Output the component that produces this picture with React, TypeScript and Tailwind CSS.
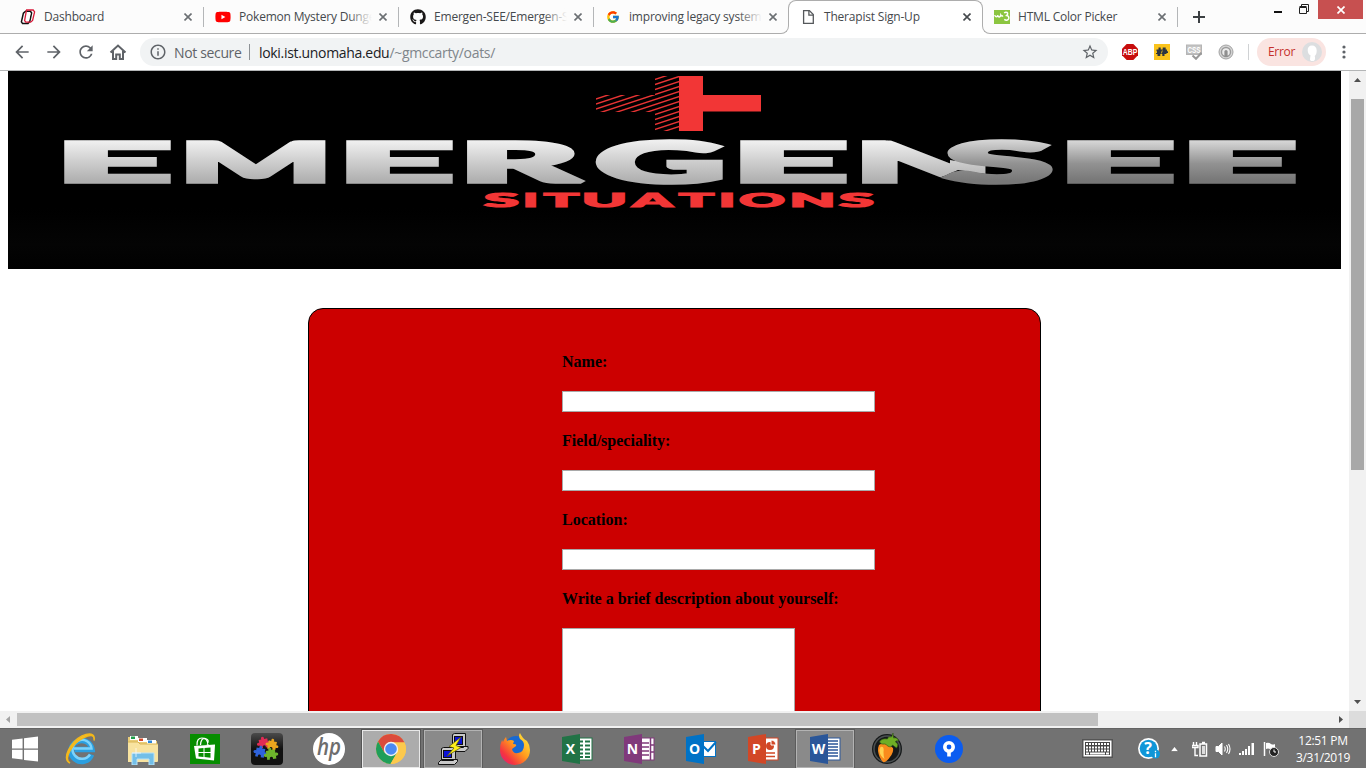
import React from "react";
import { FaGithub, FaYoutube } from "react-icons/fa";
import { FcGoogle } from "react-icons/fc";
import { MdArrowBack, MdArrowForward, MdInfoOutline, MdRefresh, MdStarBorder } from "react-icons/md";

const UI = "font-['Open_Sans','Noto_Sans',sans-serif]";

/* ---------- browser tabs ---------- */

function Close({ dark }: { dark?: boolean }) {
  return (
    <svg className="ml-auto mr-[11px] size-2 shrink-0" viewBox="0 0 8 8">
      <path d="M0.5 0.5L7.5 7.5M7.5 0.5L0.5 7.5" stroke={dark ? "#45494d" : "#6b6f73"} strokeWidth="1.6" />
    </svg>
  );
}

function OLogo() {
  return (
    <svg className="size-4" viewBox="0 0 16 16" fill="none">
      <path d="M5.600 2.200h4.800L11.600 4L9.800 12.500L8 14.600H2.600L1.400 12.800L3.400 4.200z" stroke="#111" strokeWidth="1.500" />
      <path d="M6.600 1h6.600L14.600 2.800L12.600 11.400L10.600 13.200H5.800L4.600 11.600L6.200 2.600z" stroke="#d71938" strokeWidth="1.300" />
      <path d="M7.400 4h3.200L9 11.400H6z" fill="#fff" />
    </svg>
  );
}

function PageIcon() {
  return (
    <svg className="size-4" viewBox="0 0 16 16" fill="none" stroke="#55585b" strokeWidth="1.3">
      <path d="M3.6 1.6h5.8l3.9 4v8.8H3.6z" />
      <path d="M8.9 1.8v4.3h4.2" />
    </svg>
  );
}

function W3() {
  return (
    <svg className="size-4" viewBox="0 0 16 16" fill="none">
      <rect y="1" width="16" height="14" fill="#8bc540" />
      <path d="M.8 6c.4 2.400 2.400 2.400 3 .3c.5 2.300 2.500 2.300 3-.3q.8 1.600 2.300.6" stroke="#fff" strokeWidth="1.400" />
      <path d="M10.200 4q1.300-1.300 2.800-.6q1.500 1.400-.4 3.100q2.800.5 2 3.300q-1.700 2.700-4.300.6" stroke="#fff" strokeWidth="1.500" />
    </svg>
  );
}

interface TabProps {
  icon: React.ReactNode;
  title: string;
  fade?: boolean;
  divider?: boolean;
  nudge?: boolean;
}

function Tab({ icon, title, fade, divider, nudge }: TabProps) {
  return (
    <div className={`relative flex h-[33px] w-[195px] shrink-0 items-center pl-3 ${nudge ? "-ml-px" : ""}`}>
      <span className="flex size-4 shrink-0 items-center justify-center">{icon}</span>
      <span className="relative ml-2 w-[133px] overflow-hidden whitespace-nowrap tracking-[-0.2px]">
        {title}
        {fade && <span className="absolute inset-y-0 right-0 w-6 bg-linear-to-r from-transparent to-[#fcfcfc]" />}
      </span>
      <Close />
      {divider && <span className="absolute right-[-1px] top-[7px] h-5 w-px bg-[#b4b6b8]" />}
    </div>
  );
}

function TabStrip() {
  return (
    <div className="flex h-[34px] border-b border-[#adadad] bg-[#fcfcfc] pl-2 text-[12px] text-[#45494d]">
      <Tab icon={<OLogo />} title="Dashboard" divider />
      <Tab icon={<FaYoutube className="size-4 text-[#f00]" />} title="Pokemon Mystery Dungeon" fade divider />
      <Tab icon={<FaGithub className="size-4 text-[#191717]" />} title="Emergen-SEE/Emergen-SEE" fade divider />
      <Tab icon={<FcGoogle className="size-[14px]" />} title="improving legacy systems" fade />
      <div className="relative z-10 flex h-[34px] w-[195px] shrink-0 items-center rounded-t-lg border border-b-0 border-[#adadad] bg-white pb-px pl-[11px]">
        <span className="absolute -left-2 bottom-0 size-2 bg-white">
          <span className="block size-2 rounded-br-lg border-b border-r border-[#adadad] bg-[#fcfcfc]" />
        </span>
        <span className="absolute -right-2 bottom-0 size-2 bg-white">
          <span className="block size-2 rounded-bl-lg border-b border-l border-[#adadad] bg-[#fcfcfc]" />
        </span>
        <PageIcon />
        <span className="ml-2 whitespace-nowrap tracking-[-0.2px]">Therapist Sign-Up</span>
        <Close dark />
      </div>
      <Tab icon={<W3 />} title="HTML Color Picker" divider nudge />
      <svg className="ml-4 mt-[11px] size-3" viewBox="0 0 12 12">
        <path d="M6 0v12M0 6h12" stroke="#3c4043" strokeWidth="2" />
      </svg>
      <div className="ml-auto mr-[3px] flex h-[19px]">
        <svg className="mr-[17px] mt-[11px] h-[2px] w-2" viewBox="0 0 8 2">
          <rect width="8" height="2" fill="#111" />
        </svg>
        <svg className="mr-[9px] mt-1 size-[10px]" viewBox="0 0 10 10" fill="none" stroke="#222">
          <path d="M2.500 2V.5h7v7H8" />
          <path d="M.5 3.500h7v6h-7zM.5 2.500h7" />
        </svg>
        <div className="flex w-[45px] items-center justify-center bg-[#c75050]">
          <svg className="size-[8px]" viewBox="0 0 8 8">
            <path d="M.5 .5l7 7M7.500 .5l-7 7" stroke="#fff" strokeWidth="1.700" />
          </svg>
        </div>
      </div>
    </div>
  );
}

/* ---------- toolbar ---------- */

function Toolbar() {
  return (
    <div className="flex h-[37px] items-center border-b border-[#b3b5b6] bg-white text-[#5f6368]">
      <div className="flex items-center gap-3 pl-3">
        <MdArrowBack className="size-5" />
        <MdArrowForward className="size-5" />
        <MdRefresh className="size-5" />
        <svg className="size-5" viewBox="0 0 20 20" fill="none" stroke="#5f6368" strokeWidth="2">
          <path d="M2.500 10.500L10 3.500l7.500 7M5 9v8h3.200v-4.500h3.600V17H15V9" />
        </svg>
      </div>
      <div className="ml-3 flex h-7 w-[968px] items-center rounded-full bg-[#f1f3f4] pl-[9px] text-[14px]">
        <MdInfoOutline className="size-[18px]" />
        <span className="ml-[7px] w-[67px] whitespace-nowrap tracking-[-0.35px]">Not secure</span>
        <span className="ml-2 h-4 w-px bg-[#8d9195]" />
        <span className="ml-[9px] whitespace-nowrap tracking-[-0.32px] text-[#80868b]">
          <span className="text-[#202124]">loki.ist.unomaha.edu</span>/~gmccarty/oats/
        </span>
        <MdStarBorder className="ml-auto mr-[9px] size-[18px]" />
      </div>
      <div className="ml-[14px] flex items-center gap-4">
        <svg className="size-4" viewBox="0 0 16 16">
          <path d="M4.700 0h6.600L16 4.700v6.600L11.300 16H4.700L0 11.300V4.700z" fill="#c70d0d" />
          <text x="8" y="11" textAnchor="middle" fontFamily="Liberation Sans" fontWeight="700" fontSize="8.500" textLength="14.500" lengthAdjust="spacingAndGlyphs" fill="#fff">ABP</text>
        </svg>
        <svg className="size-4" viewBox="0 0 16 16">
          <rect width="16" height="16" fill="#fac31c" />
          <path d="M4.500 3.500h2.200v2h2v-2h3v2H13v1.700h1v1.800h-1.500v1H10.500v2H8.300v-2h-2v2H3.500v-2H2V9h1V7.200h-.5V5.500h2z" fill="#2c3440" />
          <path d="M8.300 6.500L7.300 9.500" stroke="#fac31c" strokeWidth=".8" />
        </svg>
        <svg className="size-4" viewBox="0 0 16 16">
          <path d="M0 .5h16v10.500H0z" fill="#b5b5b5" />
          <path d="M1 1.500h14v8H1z" fill="#c4c4c4" />
          <text x="8" y="8.600" textAnchor="middle" fontFamily="Liberation Sans" fontWeight="700" fontSize="8.500" textLength="13" lengthAdjust="spacingAndGlyphs" fill="#fff">CSS</text>
          <path d="M6.500 11.500L10 14.800L15.500 8.800" fill="none" stroke="#999" strokeWidth="2" />
        </svg>
        <svg className="size-4" viewBox="0 0 16 16" fill="none">
          <circle cx="8" cy="8" r="7" fill="#d4d4d4" stroke="#a3a3a3" />
          <circle cx="8" cy="8" r="4.500" fill="#ececec" stroke="#9b9b9b" strokeWidth="1.400" />
          <path d="M6.400 13V7.500a1.600 1.600 0 0 1 3.200 0V13z" fill="#8f8f8f" />
        </svg>
      </div>
      <span className="ml-[14px] h-4 w-px bg-[#d0d2d4]" />
      <div className="ml-2 flex h-7 w-[69px] items-center rounded-full bg-[#fae4e1] pl-[11px] tracking-[-0.3px] text-[#c5302c]">
        <span className="whitespace-nowrap text-[12px]">Error</span>
        <svg className="ml-auto mr-1 size-5" viewBox="0 0 20 20">
          <circle cx="10" cy="10" r="10" fill="#dcdee0" />
          <path d="M10 3.500c-3 0-4.500 2-4.300 5c.2 2.500 1.300 4.500 2.800 4.700L8 17q-.2 2 2.500 2c2.500 0 3-2 2.200-5c1.500-1 2-3 2-5.500c0-3-1.700-5-4.700-5z" fill="#fff" />
        </svg>
      </div>
      <svg className="ml-4 h-4 w-1" viewBox="0 0 4 16" fill="#5f6368">
        <circle cx="2" cy="3" r="1.600" />
        <circle cx="2" cy="8" r="1.600" />
        <circle cx="2" cy="13" r="1.600" />
      </svg>
    </div>
  );
}

/* ---------- banner ---------- */

interface GlyphProps {
  char: string;
  x: number;
  y: number;
  w: number;
  h: number;
  fill: string;
}

const THICKEN = 13;
let ctx: CanvasRenderingContext2D | null = null;

/* Stretches a single heavy letter, outline included, so that it fills the given box. */
function Glyph({ char, x, y, w, h, fill }: GlyphProps) {
  ctx = ctx ?? document.createElement("canvas").getContext("2d");
  if (!ctx) return null;
  ctx.font = "900 200px Lato";
  const m = ctx.measureText(char);
  const sx = w / (m.actualBoundingBoxLeft + m.actualBoundingBoxRight + THICKEN);
  const sy = h / (m.actualBoundingBoxAscent + m.actualBoundingBoxDescent + THICKEN);
  const tx = x + (m.actualBoundingBoxLeft + THICKEN / 2) * sx;
  const ty = y + (m.actualBoundingBoxAscent + THICKEN / 2) * sy;
  return (
    <text
      transform={`translate(${tx} ${ty}) scale(${sx} ${sy})`}
      fontFamily="Lato"
      fontWeight="900"
      fontSize="200"
      fill={fill}
      stroke={fill}
      strokeWidth={THICKEN}
      strokeMiterlimit="2"
    >
      {char}
    </text>
  );
}

const WORD: [string, number, number][] = [
  ["E", 64, 107],
  ["M", 186, 140],
  ["E", 346, 107],
  ["R", 467, 120],
  ["G", 595, 128],
  ["E", 740, 107],
];
const WORD_DARK: [string, number, number][] = [
  ["S", 941, 112],
  ["E", 1067, 107],
  ["E", 1189, 107],
];
const SUB: [string, number, number][] = [
  ["S", 483, 36],
  ["I", 525, 11],
  ["T", 543, 37],
  ["U", 584, 41],
  ["A", 630, 45],
  ["T", 678, 37],
  ["I", 721, 12],
  ["O", 739, 46],
  ["N", 792, 41],
  ["S", 838, 36],
];

function Banner() {
  return (
    <svg className="ml-2 block h-[198px] w-[1333px] shrink-0" viewBox="8 71 1333 198">
      <defs>
        <linearGradient id="silver" x1="0" y1="0" x2="0" y2="1">
          <stop offset=".2" stopColor="#f0f0f0" />
          <stop offset=".5" stopColor="#cfcfcf" />
          <stop offset=".8" stopColor="#b0b0b0" />
        </linearGradient>
        <linearGradient id="steel" x1="0" y1="0" x2="0" y2="1">
          <stop offset=".2" stopColor="#d6d6d6" />
          <stop offset=".54" stopColor="#929292" />
          <stop offset=".8" stopColor="#777" />
        </linearGradient>
        <linearGradient id="floor" x1="0" y1="0" x2="0" y2="1">
          <stop offset="0" stopColor="#000" />
          <stop offset=".6" stopColor="#040404" />
          <stop offset="1" stopColor="#010101" />
        </linearGradient>
        <clipPath id="leftArm">
          <path d="M655 76h25v55h-25V112h-59V95h59z" />
        </clipPath>
        <clipPath id="cutN">
          <path d="M860 138H898L950 163V160L986 166V174L958 170L939 178L925 186H860z" />
        </clipPath>
      </defs>
      <rect x="8" y="71" width="1333" height="198" fill="#000" />
      <rect x="8" y="208" width="1333" height="61" fill="url(#floor)" />
      <path d="M679 76h24v19h58v16.500h-58V131h-24z" fill="#f23636" />
      <g clipPath="url(#leftArm)" stroke="#e83434" strokeWidth="1.400">
        {Array.from({ length: 34 }, (_, i) => (
          <path key={i} d={`M590 ${76 + i * 5}l95 -31.500`} />
        ))}
      </g>
      {WORD.map(([c, x, w], i) => (
        <Glyph key={i} char={c} x={x} y={c === "G" ? 139 : 140} w={w} h={c === "G" ? 46 : 44} fill="url(#silver)" />
      ))}
      <g clipPath="url(#cutN)">
        <Glyph char="N" x={862} y={140} w={124} h={44} fill="url(#silver)" />
      </g>
      {WORD_DARK.map(([c, x, w], i) => (
        <Glyph key={i} char={c} x={x} y={c === "S" ? 139 : 140} w={w} h={c === "S" ? 46 : 44} fill="url(#steel)" />
      ))}
      {SUB.map(([c, x, w], i) => (
        <Glyph key={i} char={c} x={x} y={193} w={w} h={15} fill="#f23636" />
      ))}
    </svg>
  );
}

/* ---------- page ---------- */

function Field({ label, children }: { label: string; children: React.ReactNode }) {
  return (
    <label className="mb-5 block">
      <span className="mb-5 block h-[18px] whitespace-nowrap text-[16px] font-bold leading-[18px]">{label}</span>
      {children}
    </label>
  );
}

const BOX = "block border border-[#a9a9a9] bg-white";

function Page() {
  return (
    <div className="h-[640px] w-[1349px] overflow-hidden bg-white">
      <Banner />
      <form className="ml-[308px] mt-[39px] h-[600px] w-[733px] rounded-[15px] border border-black bg-[#cc0000] pl-[253px] pt-11 font-['Liberation_Serif',serif] text-black">
        {["Name:", "Field/speciality:", "Location:"].map((l) => (
          <Field key={l} label={l}>
            <input className={`${BOX} h-[21px] w-[313px]`} />
          </Field>
        ))}
        <Field label="Write a brief description about yourself:">
          <textarea className={`${BOX} h-[120px] w-[233px] resize-none`} />
        </Field>
      </form>
    </div>
  );
}

function Arrow({ d, color = "#505050" }: { d: string; color?: string }) {
  return (
    <svg className="size-[17px] shrink-0" viewBox="0 0 17 17" fill={color}>
      <path d={d} />
    </svg>
  );
}

/* ---------- taskbar ---------- */

function Office({ letter, color, children }: { letter: string; color: string; children: React.ReactNode }) {
  return (
    <svg className="size-8" viewBox="0 0 32 32">
      <rect x="17" y="5" width="14" height="22" fill="#fff" stroke={color} strokeWidth="1" />
      {children}
      <path d="M1 4L19 1v30L1 28z" fill={color} />
      <text x="9.500" y="21" textAnchor="middle" fontFamily="Open Sans" fontWeight="700" fontSize="14" fill="#fff">{letter}</text>
    </svg>
  );
}

const IE = (
  <svg className="size-8" viewBox="0 0 32 32" fill="none">
    <path d="M26.500 21.500A10.500 10.500 0 1 1 27 16.500H9.500" stroke="#2b9fe0" strokeWidth="5.500" />
    <path d="M25 21.500A9.500 9.500 0 1 1 26.500 15.500H9" stroke="#7dd3fb" strokeWidth="2.500" />
    <path d="M5 30C-2 26 7 10 19 4.500C25 1.500 30 1.500 29 7.500C30.500 0 24-.5 17 3C6 8.500-4 26 5 30z" fill="#f6c62b" stroke="#f3b71b" strokeWidth="1.500" />
  </svg>
);

const Explorer = (
  <svg className="size-8" viewBox="0 0 32 32">
    <path d="M1 4h10l1 2h6l1 2h11v20H1z" fill="#e9cc78" />
    <path d="M3 3h8v4H3zM11 5h9v4h-9zM20 7h9v4h-9z" fill="#fff" />
    <path d="M4 3.500h4V6H4z" fill="#1f9f4a" />
    <path d="M12 5.500h4V8h-4z" fill="#d54b2b" />
    <path d="M21 7.500h4V10h-4z" fill="#2d87d8" />
    <path d="M1 9h10l2 2h18v17q0 1-1 1H1z" fill="#f8e3a0" />
    <path d="M1 9h10l2 2h18" stroke="#d9b655" fill="none" />
    <path d="M5 32V20h22v12h-5v-6H10v6z" fill="#73bfe8" stroke="#b9e3f9" />
    <path d="M9 15v9M5 20h9" stroke="#fff" strokeWidth="1" opacity=".7" />
  </svg>
);

const Store = (
  <svg className="size-8" viewBox="0 0 32 32">
    <rect x="1" y="1" width="30" height="30" fill="#068d00" />
    <path d="M5 13l21-1.500-1 16L7 25.500z" fill="#fff" />
    <path d="M8 12.500Q7.500 5 13 5t6 7M11.500 12q.5-7.500 5-6.500t1.500 6" fill="none" stroke="#fff" strokeWidth="1.200" />
    <path d="M9.500 15.500l5-.5v4h-5zM15.500 15l6-.5V19h-6zM9.500 20h5v4l-5-.5zM15.500 20h6v4.700l-6-.6z" fill="#068d00" />
  </svg>
);

const PIECE = "M1 2h2.500C2.500-1 7-1 6 2h3v3c3-1 3 3.500 0 2.500V10H6c1-3-3.500-3-2.500 0H1V7c-3 1-3-3.500 0-2.500z";
const Puzzle = (
  <svg className="size-8" viewBox="0 0 32 32">
    <defs>
      <linearGradient id="pz" x1="0" y1="0" x2="0" y2="1">
        <stop stopColor="#4b4b4b" />
        <stop offset=".5" stopColor="#111" />
      </linearGradient>
    </defs>
    <rect width="32" height="32" rx="4" fill="url(#pz)" />
    <path d={PIECE} transform="translate(7 4) rotate(-12 5 5) scale(1.100)" fill="#e22c55" />
    <path d={PIECE} transform="translate(16 6) rotate(12 5 5) scale(1.050)" fill="#eba51e" />
    <path d={PIECE} transform="translate(4 13) rotate(10 5 5) scale(1.100)" fill="#2e63dd" />
    <path d={PIECE} transform="translate(14 15) rotate(-10 5 5) scale(1.150)" fill="#6db42c" />
  </svg>
);

const HP = (
  <svg className="size-8" viewBox="0 0 32 32">
    <circle cx="16" cy="16" r="16" fill="#fff" />
    <text x="16" y="22" textAnchor="middle" fontFamily="Open Sans" fontStyle="italic" fontWeight="600" fontSize="24" textLength="24" lengthAdjust="spacingAndGlyphs" fill="#6d6d6d">hp</text>
  </svg>
);

const Chrome = (
  <svg className="size-8" viewBox="0 0 32 32">
    <circle cx="16" cy="16" r="15" fill="#fcc94d" />
    <path d="M16 16L9.500 19.750L3 8.500A15 15 0 0 1 29.500 9.500H16z" fill="#db4b3c" />
    <path d="M3 8.500A15 15 0 0 0 15.500 31L22 19.750L16 16l-6.500 3.750z" fill="#1f9e5a" />
    <path d="M16 9.500h13.500A15 15 0 0 1 15.500 31L22 19.750z" fill="#fcc94d" />
    <circle cx="16" cy="16" r="7.200" fill="#f1f1f1" />
    <circle cx="16" cy="16" r="5.800" fill="#4a8af4" />
  </svg>
);

const Putty = (
  <svg className="size-8" viewBox="0 0 32 32" strokeWidth="1">
    <path d="M15.500 1.500l2-1h11v12l-2 2h-11zM12.500 16.500l3-3h15.500v2l-3 3H12.500z" fill="#c9c9c9" stroke="#111" />
    <rect x="17.500" y="3.500" width="8" height="8" fill="#0a12d8" stroke="#111" />
    <path d="M4.500 15.500l2-1h12v11l-2 2h-12zM1.500 29.500l3-3h16v2l-3 3h-16z" fill="#c9c9c9" stroke="#111" />
    <rect x="6.500" y="17.500" width="8" height="7" fill="#0a12d8" stroke="#111" />
    <path d="M24 4L12 13.500l5 1.500L10 23l14-8.500-5-2z" fill="#ffee1a" stroke="#55520a" strokeWidth=".7" />
  </svg>
);

const Firefox = (
  <svg className="size-8" viewBox="0 0 32 32">
    <defs>
      <linearGradient id="ff" x1="1" y1="0" x2="0" y2="1">
        <stop offset=".1" stopColor="#ffe43a" />
        <stop offset=".45" stopColor="#ff9a1d" />
        <stop offset=".75" stopColor="#f6353f" />
        <stop offset="1" stopColor="#d9158c" />
      </linearGradient>
    </defs>
    <circle cx="17" cy="14" r="11" fill="#1769d2" />
    <path d="M3 7l1 2q1-3 3-5l1 4q4-2 7 0l-1 3q4 0 3 2l-4 3q1 5 6 4q6-1 6-8q0-4-4-6q-2-4 0-6q2 5 7 8q3 4 3 9A15 15 0 0 1 1 17Q1 11 3 7z" fill="url(#ff)" />
  </svg>
);

const FL = (
  <svg className="size-8" viewBox="0 0 32 32">
    <circle cx="16" cy="16" r="15" fill="#151819" />
    <circle cx="16" cy="16" r="13" fill="none" stroke="#4a4f50" strokeWidth="1.500" />
    <path d="M8 12q6-4 14 3q1 4-3 9q-4 6-7 5q-4-4-5-11q0-4 1-6z" fill="#f98b1c" />
    <path d="M9.500 14q4-1 3 5q0 5 1 7q-5-3-5-9z" fill="#ffd14f" />
    <path d="M22 0l.5 5q4-1 5 3q-3-1-3 1q4 2 1 6l-4-3q-1 3-5 1q-1-2-3-2q-3 1-5-2q2-4 8-3q0-3 4-2z" fill="#6fae25" stroke="#2c5414" strokeWidth=".6" />
  </svg>
);

const Pin = (
  <svg className="size-8" viewBox="0 0 32 32">
    <circle cx="16" cy="16" r="14" fill="#0b5cf0" />
    <circle cx="16" cy="14" r="4.200" fill="none" stroke="#fff" strokeWidth="3.600" />
    <path d="M14.200 17h3.600v6.500h-3.600z" fill="#fff" />
  </svg>
);

const APPS: { icon: React.ReactNode; state?: "active" | "open" }[] = [
  { icon: IE },
  { icon: Explorer },
  { icon: Store },
  { icon: Puzzle },
  { icon: HP },
  { icon: Chrome, state: "active" },
  { icon: Putty, state: "open" },
  { icon: Firefox },
  {
    icon: (
      <Office letter="X" color="#217346">
        <path d="M19 8.500h3M24 8.500h5M19 12.500h3M24 12.500h5M19 16.500h3M24 16.500h5M19 20.500h3M24 20.500h5M19 24h3M24 24h5" stroke="#217346" strokeWidth="2" />
      </Office>
    ),
  },
  {
    icon: (
      <Office letter="N" color="#80397b">
        <path d="M19 10h7M19 14h7M19 18h7M19 22h7M27.500 5v22M28 12h3M28 19h3" stroke="#80397b" strokeWidth="1.500" />
      </Office>
    ),
  },
  {
    icon: (
      <svg className="size-8" viewBox="0 0 32 32">
        <rect x="16" y="8.500" width="14.500" height="15" fill="#fff" stroke="#0072c6" />
        <path d="M18 13l5 5L31 9" fill="none" stroke="#0072c6" strokeWidth="2" />
        <path d="M1 4L19 1v30L1 28z" fill="#0072c6" />
        <text x="9.500" y="21" textAnchor="middle" fontFamily="Open Sans" fontWeight="700" fontSize="14" fill="#fff">O</text>
      </svg>
    ),
  },
  {
    icon: (
      <Office letter="P" color="#d24726">
        <circle cx="23" cy="13" r="4" fill="#d24726" />
        <path d="M24 12V7a5 5 0 0 1 5 5z" fill="#d24726" stroke="#fff" />
        <path d="M19 20h9M19 23.500h9" stroke="#d24726" strokeWidth="1.500" />
      </Office>
    ),
  },
  {
    icon: (
      <Office letter="W" color="#2a5699">
        <path d="M19 8h10M19 11h10M19 14h10M19 17h10M19 20h10M19 23h10" stroke="#2a5699" strokeWidth="1.300" />
      </Office>
    ),
    state: "open",
  },
  { icon: FL },
  { icon: Pin },
];

const SLOT = "flex h-[38px] w-[58px] items-center justify-center border";

function slotClass(state?: "active" | "open") {
  if (state === "active") return `${SLOT} border-[#e8e8e8] bg-[#acacac] outline outline-[#555]`;
  if (state === "open") return `${SLOT} border-[#b3b3b3] bg-[#8a8a8a] outline outline-[#5c5c5c]`;
  return `${SLOT} border-transparent`;
}

function Taskbar() {
  return (
    <div className="flex h-10 border-t border-[#646464] bg-[#727272]">
      <div className="flex w-[50px] items-center justify-center">
        <svg className="h-[26px] w-[26px]" viewBox="0 0 27 27" fill="#fff">
          <path d="M0 4l11-1.500V13H0zM12.500 2.300L27 .5V13H12.500zM0 14.300h11V24.500L0 23zM12.500 14.300H27V26.500l-14.500-1.700z" />
        </svg>
      </div>
      <div className="flex items-center gap-1 pl-0.5">
        {APPS.map((a, i) => (
          <div key={i} className={slotClass(a.state)}>{a.icon}</div>
        ))}
      </div>
      <div className="ml-auto flex items-center">
        <svg className="h-[19px] w-[31px]" viewBox="0 0 31 19" fill="none">
          <rect x=".5" y=".5" width="30" height="18" fill="#555" stroke="#555" />
          <rect x="1.500" y="1.500" width="28" height="16" fill="#fff" />
          <rect x="3" y="3" width="25" height="13" fill="#444" />
          <path d="M4 5h23M4 8.500h23M4 11.500h23" stroke="#fff" strokeWidth="2" strokeDasharray="2 1" />
          <path d="M4 14.500h3M8 14.500h15M24 14.500h3" stroke="#fff" strokeWidth="2" />
        </svg>
        <svg className="ml-[25px] size-[22px]" viewBox="0 0 22 22">
          <circle cx="10.500" cy="10.500" r="10.500" fill="#fff" />
          <circle cx="10.500" cy="10.500" r="8.800" fill="#0f96d8" />
          <text x="10" y="16" textAnchor="middle" fontFamily="Open Sans" fontWeight="700" fontSize="16" fill="#fff">?</text>
          <circle cx="17.500" cy="16" r="4.500" fill="#0f96d8" />
          <path d="M17.500 12.800v1.500M17.500 15.200v4" stroke="#fff" strokeWidth="1.300" />
        </svg>
        <svg className="ml-[10px] h-[6px] w-[9px]" viewBox="0 0 9 6">
          <path d="M4.500 0.500L8.500 5.500H.5z" fill="#fff" stroke="#555" strokeWidth=".6" />
        </svg>
        <svg className="ml-[13px] h-4 w-[16px]" viewBox="0 0 16 16" fill="none" stroke="#fff">
          <path d="M1.500 1v3M4.500 1v3M0 4.500h6v2H0zM3 7v7.500h3" strokeWidth="1.400" />
          <path d="M8 3h6.500v12H8zM10 1.500h3" strokeWidth="1.500" />
          <path d="M10 5h3v8h-3z" fill="#ddd" stroke="none" />
        </svg>
        <svg className="ml-[7px] h-4 w-4" viewBox="0 0 16 16" fill="none" stroke="#fff">
          <path d="M1 5.500h2.500L7 2v12l-3.500-3.500H1z" fill="#fff" />
          <path d="M9.500 5.500q1.500 2.500 0 5M11.500 4q2.500 4 0 8M13.500 3q3 5 0 10" strokeWidth="1.100" />
        </svg>
        <svg className="ml-[8px] h-3 w-4" viewBox="0 0 16 12" fill="#fff">
          <path d="M0 10h2v2H0zM3 8h2v4H3zM6 6h2v6H6zM9 3h2v9H9zM12.500 0h2.500v12h-2.500z" />
        </svg>
        <svg className="ml-[8px] size-4" viewBox="0 0 16 16" fill="none">
          <path d="M1.500 1v14" stroke="#fff" strokeWidth="1.500" />
          <path d="M3 2q3-1 5 1q2 1 4 0v6q-3 1-5-1q-2-1-4 0z" fill="#fff" />
          <circle cx="11" cy="11" r="4.500" fill="#222" stroke="#ddd" />
          <path d="M11 8.500V11h2" stroke="#fff" />
        </svg>
        <div className="ml-[4px] mr-[3px] w-[80px] text-center text-[12px] leading-[17px] tracking-[-0.3px] text-white">
          <div>12:51 PM</div>
          <div>3/31/2019</div>
        </div>
      </div>
    </div>
  );
}

export default function App() {
  return (
    <div className={`flex h-[768px] w-[1366px] flex-col overflow-hidden bg-white ${UI}`}>
      <TabStrip />
      <Toolbar />
      <div className="flex h-[640px]">
        <Page />
        <div className="flex w-[17px] flex-col items-center bg-[#f1f1f1]">
          <Arrow d="M5 11h7L8.500 7z" />
          <div className="mt-[11px] h-[371px] w-[13px] bg-[#a8a8a8]" />
          <div className="flex-1" />
          <Arrow d="M5 6h7L8.500 10z" />
        </div>
      </div>
      <div className="flex h-[17px] items-center bg-[#f1f1f1]">
        <Arrow d="M10 5v7L6 8.500z" color="#a3a3a3" />
        <div className="h-[13px] w-[1081px] bg-[#c1c1c1]" />
        <div className="flex-1" />
        <Arrow d="M7 5v7l4-3.500z" />
        <div className="h-[17px] w-[17px] bg-[#dcdcdc]" />
      </div>
      <Taskbar />
    </div>
  );
}
